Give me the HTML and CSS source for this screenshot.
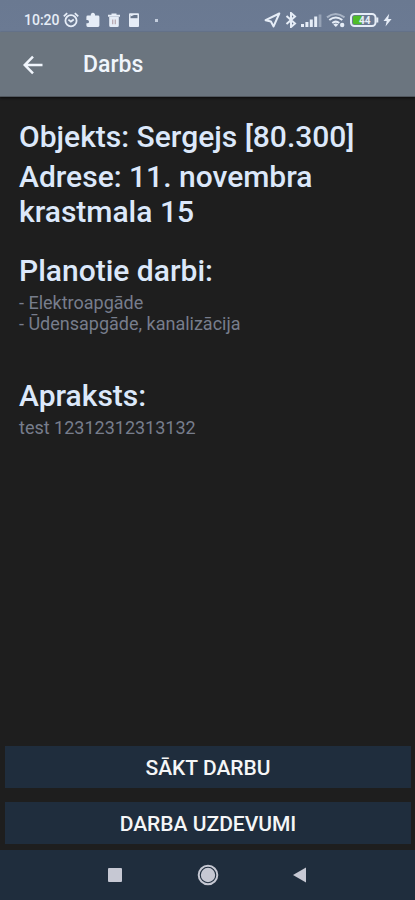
FILE: index.html
```html
<!DOCTYPE html>
<html lang="lv">
<head>
<meta charset="utf-8">
<meta name="viewport" content="width=device-width, initial-scale=1">
<title>Darbs</title>
<link rel="stylesheet" href="styles.css">
</head>
<body>
<div class="screen">
  <div class="status">
    <div class="status-group left">
      <span class="clock">10:20</span>
      <svg class="alarm" width="16" height="16" viewBox="0 0 16 16" fill="none" stroke="currentColor" stroke-width="1.8"><circle cx="8" cy="8.7" r="5.6"/><path d="M.8 4.400 4.200 1.200M15.200 4.400l-3.400-3.200M5.400 7.600l2.500 2 2.900-2"/></svg>
      <svg width="14" height="16" viewBox="0 0 14 16" fill="currentColor"><path d="M4.8 3.6a2.2 2.2 0 1 1 4.2 0H12q1.4 0 1.4 1.4v8.6q0 1.4-1.4 1.4H1.8Q.4 15 .4 13.600V11.300h1a1.600 1.600 0 0 0 0-3.200h-1V5q0-1.400 1.400-1.400z"/></svg>
      <svg width="14" height="16" viewBox="0 0 14 16"><path fill="currentColor" d="M4.500 1.400h5v1.300H13v2H1v-2h3.500zM2.200 5h9.600v8.500q0 1.500-1.500 1.500H3.700q-1.500 0-1.500-1.500z"/><path stroke="#b8a9b1" stroke-width="1.300" d="M5.700 7.500v4.800M8.300 7.500v4.800"/></svg>
      <svg width="12" height="16" viewBox="0 0 12 16"><rect x="1" y="1.300" width="10" height="13.700" rx="1" fill="currentColor"/><path fill="#67758b" d="M2.500 3h7v3.200h-7z"/><path fill="currentColor" d="M2.500 3H6L2.500 4.500z"/></svg>
      <span class="dot"></span>
    </div>
    <div class="status-group right">
      <svg width="17" height="16" viewBox="0 0 17 16" fill="none" stroke="currentColor" stroke-width="2" stroke-linejoin="round"><path d="M15.300 1.500 1.600 8.200l5.300 1.200 2.700 5z"/></svg>
      <svg width="12" height="16" viewBox="0 0 12 16" fill="none" stroke="currentColor" stroke-width="2"><path d="m1.500 4 8.500 7.600L6 15V1l4 3.400L1.500 12"/></svg>
      <svg width="21" height="16" viewBox="0 0 21 16" fill="currentColor"><path d="M0 12h3v3H0zM4.400 10h3v5h-3zM8.800 7.500h3V15h-3zM13.200 4.500h3V15h-3z"/><path opacity=".35" d="M17.600 2.500h2.800V15h-2.800z"/></svg>
      <svg width="20" height="16" viewBox="0 0 20 16" fill="none" stroke="currentColor" stroke-width="2"><path opacity=".5" d="M1 5.400q8.500-6.800 17.500 0"/><path d="M3.300 8q6.500-5 13 0M6.300 11q3.500-2.800 7 0"/><path fill="currentColor" stroke="none" d="m7.300 12.400 2.500 2.600 2.500-2.600q-2.500-1.700-5 0z"/><circle cx="16.200" cy="13" r="2.200" fill="currentColor" stroke="none"/></svg>
      <svg width="29" height="16" viewBox="0 0 29 16"><rect x="1" y="2" width="24.500" height="12" rx="3.500" fill="none" stroke="currentColor" stroke-width="2"/><path fill="currentColor" d="M26.300 5.500h2v5h-2z"/><path fill="#4fbd28" d="M4.500 3.800h7v8.400h-7q-1.500 0-1.500-1.500V5.300q0-1.500 1.500-1.500z"/><text x="9" y="12" class="charge">44</text></svg>
      <svg width="9" height="16" viewBox="0 0 9 16" fill="currentColor"><path d="M6.200 1.800.5 9h3.200L2.500 14.500 8.600 7H5.200z"/></svg>
    </div>
  </div>
  <header class="bar">
    <button class="back" aria-label="Atpakaļ"><svg width="20" height="20" viewBox="0 0 20 20" fill="none" stroke="currentColor" stroke-width="2.500"><path d="M19.500 10H2M10 1.700 1.700 10l8.300 8.300"/></svg></button>
    <h1 class="title">Darbs</h1>
  </header>
  <main class="content">
    <h2>Objekts: Sergejs [80.300]</h2>
    <h2 class="address">Adrese: 11. novembra krastmala 15</h2>
    <section class="works">
      <h2>Planotie darbi:</h2>
      <p>- Elektroapgāde</p>
      <p>- Ūdensapgāde, kanalizācija</p>
    </section>
    <section class="about">
      <h2>Apraksts:</h2>
      <p>test 12312312313132</p>
    </section>
  </main>
  <div class="actions">
    <button class="action">SĀKT DARBU</button>
    <button class="action">DARBA UZDEVUMI</button>
  </div>
  <nav class="nav">
    <button aria-label="Pārskats"><svg width="24" height="24" viewBox="0 0 24 24"><rect x="5" y="5" width="14" height="14" rx="1" fill="currentColor"/></svg></button>
    <button aria-label="Sākums"><svg width="24" height="24" viewBox="0 0 24 24"><circle cx="12" cy="12" r="9.300" fill="none" stroke="currentColor" stroke-width="2"/><circle cx="12" cy="12" r="7.200" fill="currentColor"/></svg></button>
    <button aria-label="Atpakaļ"><svg width="24" height="24" viewBox="0 0 24 24"><path fill="currentColor" d="M17 4.500v15L4 12z"/></svg></button>
  </nav>
</div>
</body>
</html>
```
FILE: styles.css
```css
* {
  box-sizing: border-box;
}

body {
  margin: 0;
  background: #1e1e1e;
  color: #dce8fa;
  font-family: Roboto, "Noto Sans", sans-serif;
}

h1,
h2,
p {
  margin: 0;
  font-weight: 500;
}

button {
  border: 0;
  padding: 0;
  background: none;
  color: inherit;
  font: inherit;
}

svg {
  display: block;
}

.screen {
  display: flex;
  flex-direction: column;
  min-height: 100vh;
}

.status {
  display: flex;
  justify-content: space-between;
  padding: 12px 23px 4px 24px;
  background: linear-gradient(#6a7991, #6b7a93);
  color: #e6edf7;
}

.status-group {
  display: flex;
  align-items: center;
}

.left {
  gap: 7px;
}

.right {
  gap: 4px;
}

.clock {
  font-size: 14px;
  font-weight: 500;
  line-height: 16px;
}

.alarm {
  margin-left: -4px;
}

.dot {
  width: 3px;
  height: 3px;
  margin-left: 8px;
  background: #c3cddd;
}

.charge {
  fill: #e6edf7;
  font-size: 10px;
  font-weight: 700;
}

.bar {
  display: flex;
  align-items: center;
  gap: 40px;
  height: 65px;
  padding: 2px 23px 0;
  background: #6b757f;
  border-bottom: 1px solid #51575e;
  box-shadow: 0 1px 2px #0c0c0c;
  color: #f0f5fc;
}

.title {
  font-size: 23px;
  line-height: 28px;
}

.content {
  flex: 1;
  padding: 22px 19px;
}

h2 {
  font-size: 30px;
  line-height: 35px;
}

p {
  color: #777d8c;
  font-size: 18px;
  font-weight: 400;
  line-height: 21px;
}

.address {
  margin-top: 5px;
}

.works {
  margin-top: 24px;
}

.about {
  margin-top: 44px;
}

section h2 {
  margin-bottom: 4px;
}

.actions {
  display: flex;
  flex-direction: column;
  gap: 14px;
  padding: 0 4px 6px 5px;
}

.action {
  height: 42px;
  padding-top: 2px;
  background: #1f2d3d;
  color: #f5f6f7;
  font-size: 21px;
  font-weight: 500;
}

.nav {
  display: flex;
  justify-content: center;
  gap: 69px;
  height: 50px;
  background: #1f2d3d;
  color: #c6c8d3;
}
```
